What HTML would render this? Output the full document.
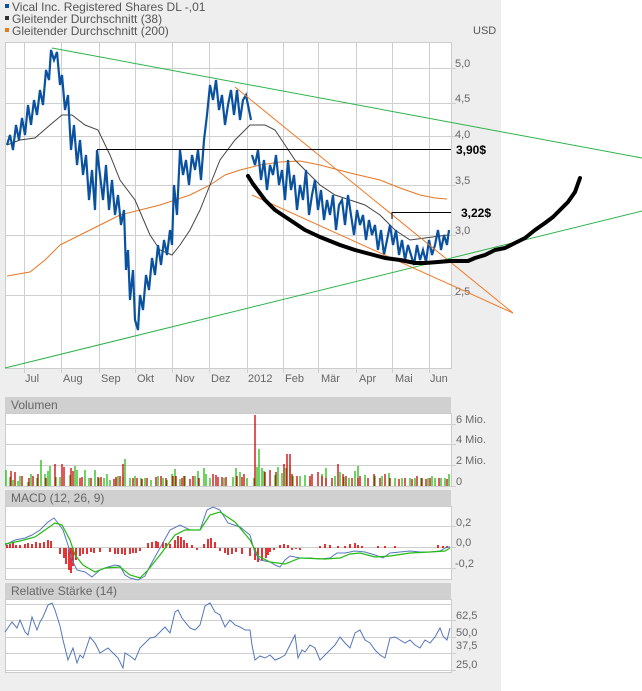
<!DOCTYPE html>
<html><head><meta charset="utf-8"><style>
html,body{margin:0;padding:0;background:#fff;}
svg{display:block;}
text{font-family:"Liberation Sans",sans-serif;}
</style></head><body>
<svg width="642" height="691" viewBox="0 0 642 691" xmlns="http://www.w3.org/2000/svg">
<rect x="0" y="0" width="501" height="691" fill="#eeeeee"/>
<!-- legend -->
<rect x="5" y="4" width="4" height="4" fill="#0a52a0"/>
<rect x="5" y="16" width="4" height="4" fill="#333"/>
<rect x="5" y="28" width="4" height="4" fill="#e87722"/>
<g font-size="12" fill="#555">
<text x="12" y="11">Vical Inc. Registered Shares DL -,01</text>
<text x="12" y="23">Gleitender Durchschnitt (38)</text>
<text x="12" y="35">Gleitender Durchschnitt (200)</text>
<text x="473" y="34" font-size="11">USD</text>
</g>
<!-- price panel -->
<rect x="5.5" y="42.5" width="446" height="326" fill="#fff" stroke="#ccc"/>
<g stroke="#cfcfcf" stroke-width="1">
<path d="M24.5 43V373M61.5 43V373M99.5 43V373M135.5 43V373M172.5 43V373M209.5 43V373M247.5 43V373M283.5 43V373M318.5 43V373M356.5 43V373M392.5 43V373M429.5 43V373"/>
<path d="M6 68.5H456M6 103.5H456M6 136.5H456M6 185.5H456M6 235.5H456M6 295.5H456"/>
</g>
<g font-size="11" fill="#666">
<text x="455" y="67">5,0</text><text x="455" y="102">4,5</text><text x="455" y="138">4,0</text>
<text x="455" y="184">3,5</text><text x="455" y="234">3,0</text><text x="455" y="295">2,5</text>
<text x="25" y="382">Jul</text><text x="63" y="382">Aug</text><text x="101" y="382">Sep</text><text x="137" y="382">Okt</text>
<text x="175" y="382">Nov</text><text x="211" y="382">Dez</text><text x="248" y="382">2012</text><text x="285" y="382">Feb</text>
<text x="321" y="382">Mär</text><text x="359" y="382">Apr</text><text x="395" y="382">Mai</text><text x="430" y="382">Jun</text>
</g>
<!-- MA200 -->
<polyline fill="none" stroke="#e87722" stroke-width="1" points="7,276 30,272 45,260 60,245 80,235 100,225 120,215 140,210 160,205 175,200 190,195 210,185 225,175 240,170 260,165 280,162 300,161 320,165 350,173 380,180 400,188 420,195 435,198 447,199"/>
<!-- MA38 -->
<polyline fill="none" stroke="#444" stroke-width="1" points="7,145 20,140 35,138 50,125 62,115 72,115 85,125 98,130 110,155 120,180 135,200 150,235 160,250 172,255 180,245 190,230 200,210 210,185 220,160 235,140 250,125 265,125 275,130 285,145 295,160 305,170 320,185 335,195 350,200 365,205 380,215 395,230 410,240 425,238 440,236 448,235"/>
<!-- price -->
<polyline fill="none" stroke="#0a52a0" stroke-width="2.2" points="7,145 10,135 13,150 16,125 19,140 22,118 25,135 28,105 31,125 34,100 37,115 40,90 43,105 46,70 49,80 51,50 54,60 57,52 60,85 62,75 65,110 68,95 71,150 74,125 77,165 80,140 83,175 86,155 89,200 92,170 95,210 97,150 100,175 103,200 106,165 109,210 112,180 115,215 118,195 121,225 124,210 126,270 128,250 130,300 133,270 135,320 138,330 140,295 143,310 146,275 149,290 152,258 155,275 158,245 161,265 164,240 167,255 170,230 172,245 174,185 177,215 180,150 183,175 186,160 189,185 192,155 195,170 198,150 201,180 204,140 207,115 210,85 213,100 216,80 219,110 222,95 225,125 228,105 231,90 234,115 237,90 240,120 243,100 246,95 249,110 251,120"/>
<polyline fill="none" stroke="#0a52a0" stroke-width="2.2" points="252,155 255,165 258,150 261,180 264,160 267,190 270,165 273,175 276,155 279,185 282,170 285,200 288,160 291,190 294,175 297,210 300,185 303,200 306,170 309,215 312,195 315,180 318,210 321,190 324,220 327,200 330,215 333,195 336,230 339,205 342,200 345,225 348,195 351,215 354,235 357,210 360,225 363,215 366,240 369,220 372,235 375,225 378,250 381,230 384,255 387,240 390,225 393,245 396,230 399,255 402,240 405,260 408,245 411,255 414,265 417,245 420,260 423,250 426,262 429,240 432,255 435,245 438,230 441,250 444,235 447,245 449,230"/>
<!-- drawn lines -->
<line x1="52" y1="48" x2="642" y2="158" stroke="#2db34a" stroke-width="1"/>
<line x1="5" y1="368" x2="642" y2="211" stroke="#2db34a" stroke-width="1"/>
<line x1="235" y1="87" x2="513" y2="313" stroke="#f07a28" stroke-width="1"/>
<line x1="252" y1="195" x2="513" y2="313" stroke="#f07a28" stroke-width="1"/>
<line x1="97" y1="149.5" x2="451" y2="149.5" stroke="#000" stroke-width="1"/>
<line x1="392" y1="212.5" x2="451" y2="212.5" stroke="#000" stroke-width="1"/>
<path d="M392 212V219" stroke="#000"/>
<g font-size="12" font-weight="bold" fill="#000">
<text x="456" y="154">3,90$</text><text x="461" y="217">3,22$</text>
</g>
<polyline fill="none" stroke="#000" stroke-width="4" stroke-linecap="round" stroke-linejoin="round" points="248,176 253,184 265,200 275,210 290,220 305,230 320,237 340,245 355,250 370,254 385,258 400,260 415,263 425,263 438,262 450,261 460,261 468,261 475,258 485,255 495,250 505,248 515,243 525,238 535,230 545,223 553,217 560,210 568,202 575,192 580,178"/>

<!-- Volume panel -->
<rect x="5" y="397" width="446" height="16" fill="#d0d0d0"/>
<text x="11" y="409" font-size="12" fill="#666">Volumen</text>
<rect x="5.5" y="413.5" width="446" height="73" fill="#fff" stroke="#ccc"/>
<path d="M6 424.5H456M6 444.5H456M6 465.5H456M6 486.5H456" stroke="#cfcfcf"/>
<g font-size="11" fill="#666">
<text x="456" y="423">6 Mio.</text><text x="456" y="443">4 Mio.</text><text x="456" y="464">2 Mio.</text><text x="456" y="485">0</text>
</g>
<path stroke="#22bb11" stroke-width="1.3" d="M6 486v-16M10 486v-9M13 486v-6M18 486v-5M20 486v-10M28 486v-4M31 486v-12M37 486v-8M41 486v-26M45 486v-12M48 486v-15M50 486v-20M56 486v-9M60 486v-9M70 486v-11M75 486v-20M77 486v-16M85 486v-16M89 486v-8M95 486v-16M99 486v-8M104 486v-8M107 486v-12M110 486v-6M116 486v-8M118 486v-10M123 486v-9M125 486v-27M130 486v-8M135 486v-10M141 486v-8M145 486v-8M151 486v-6M158 486v-10M163 486v-8M167 486v-6M172 486v-12M175 486v-17M180 486v-7M185 486v-10M195 486v-10M198 486v-15M204 486v-18M206 486v-12M210 486v-8M224 486v-8M233 486v-9M236 486v-18M240 486v-14M247 486v-8M254 486v-8M257 486v-19M259 486v-37M262 486v-18M264 486v-15M275 486v-11M278 486v-19M282 486v-13M286 486v-18M290 486v-20M293 486v-10M300 486v-10M305 486v-11M310 486v-6M322 486v-12M326 486v-18M335 486v-10M340 486v-14M344 486v-9M349 486v-8M355 486v-15M358 486v-20M365 486v-11M375 486v-10M382 486v-10M389 486v-13M395 486v-8M402 486v-8M410 486v-8M415 486v-8M421 486v-8M428 486v-8M432 486v-10M435 486v-8M441 486v-8M445 486v-8M449 486v-12"/>
<path stroke="#cc0000" stroke-width="1.3" d="M11 486v-15M15 486v-14M22 486v-10M29 486v-8M33 486v-10M38 486v-12M46 486v-8M55 486v-22M62 486v-22M64 486v-19M71 486v-18M73 486v-15M80 486v-8M82 486v-9M91 486v-8M98 486v-9M101 486v-9M114 486v-7M116 486v-9M120 486v-10M123 486v-22M133 486v-8M137 486v-8M142 486v-7M147 486v-8M156 486v-9M161 486v-10M166 486v-8M173 486v-10M176 486v-10M182 486v-8M184 486v-10M190 486v-7M193 486v-10M199 486v-8M213 486v-12M216 486v-11M218 486v-9M222 486v-9M226 486v-9M237 486v-10M242 486v-9M244 486v-12M255 486v-71M265 486v-14M270 486v-16M276 486v-14M284 486v-22M287 486v-32M290 486v-32M292 486v-12M297 486v-10M310 486v-10M312 486v-12M318 486v-14M322 486v-10M326 486v-8M332 486v-8M338 486v-22M343 486v-12M346 486v-10M352 486v-8M358 486v-8M360 486v-10M368 486v-8M374 486v-12M380 486v-8M385 486v-12M390 486v-8M399 486v-7M405 486v-8M412 486v-7M417 486v-10M422 486v-8M426 486v-7M430 486v-8M439 486v-8M447 486v-7"/>

<!-- MACD panel -->
<rect x="5" y="490" width="446" height="16" fill="#d0d0d0"/>
<text x="11" y="502" font-size="12" fill="#666">MACD (12, 26, 9)</text>
<rect x="5.5" y="506.5" width="446" height="73" fill="#fff" stroke="#ccc"/>
<path d="M6 526.5H456M6 547.5H456M6 568.5H456" stroke="#cfcfcf"/>
<g font-size="11" fill="#666">
<text x="456" y="526">0,2</text><text x="456" y="546">0,0</text><text x="455" y="567">-0,2</text>
</g>
<path stroke="#e00000" stroke-width="1.6" d="M7 548v-3M10 548v-4M13 548v-5M16 548v-3M20 548v-3M25 548v-4M28 548v-5M32 548v-4M36 548v-6M40 548v-5M44 548v-6M48 548v-8M51 548v-7M60 548v6M64 548v10M66 548v16M69 548v22M71 548v25M73 548v18M76 548v12M80 548v8M83 548v6M87 548v6M91 548v4M94 548v5M100 548v4M110 548v4M115 548v6M118 548v6M122 548v6M125 548v7M130 548v6M133 548v5M136 548v5M140 548v3M148 548v-5M152 548v-6M156 548v-7M158 548v-6M163 548v-6M166 548v-5M170 548v-4M175 548v-8M178 548v-12M181 548v-11M184 548v-8M187 548v-5M192 548v-3M197 548v2M204 548v-4M208 548v-9M211 548v-10M215 548v-6M220 548v3M225 548v5M228 548v7M232 548v6M236 548v4M242 548v6M250 548v8M255 548v12M258 548v14M262 548v12M266 548v10M268 548v7M270 548v4M274 548v2M280 548v-3M284 548v-4M288 548v-3M292 548v2M296 548v1M300 548v2M320 548v-2M325 548v-4M330 548v-3M338 548v-2M345 548v-2M350 548v-4M355 548v-5M358 548v-3M362 548v-2M378 548v-2M385 548v-2M395 548v-2M438 548v-3M443 548v-2M447 548v-2"/>
<polyline fill="none" stroke="#5577bb" stroke-width="1" points="5,545 15,540 25,538 32,535 40,530 48,522 54,518 58,523 63,530 68,545 72,560 77,570 85,572 92,577 100,570 108,567 115,565 120,566 125,575 130,578 138,580 145,576 150,566 160,548 170,530 180,525 190,530 200,530 207,510 213,507 220,510 228,523 240,527 250,535 255,553 260,560 270,562 275,565 280,567 285,560 290,556 300,558 310,558 320,559 330,558 337,553 345,553 355,551 365,552 375,555 383,558 390,553 400,552 410,551 420,552 430,552 440,551 447,547 450,547"/>
<polyline fill="none" stroke="#22bb11" stroke-width="1.2" points="5,544 20,541 35,537 45,530 55,523 62,525 70,540 75,555 83,565 95,572 105,568 120,567 130,575 140,578 148,570 160,555 175,535 185,530 200,530 210,515 220,512 235,522 250,540 258,556 270,562 285,564 300,558 325,559 340,558 350,554 360,553 375,557 390,556 410,553 430,552 445,551 450,548"/>

<!-- RSI panel -->
<rect x="5" y="583" width="446" height="16" fill="#d0d0d0"/>
<text x="11" y="595" font-size="12" fill="#666">Relative Stärke (14)</text>
<rect x="5.5" y="599.5" width="446" height="73" fill="#fff" stroke="#ccc"/>
<path d="M6 604.5H451M6 620.5H456M6 637.5H456M6 653.5H456M6 670.5H456" stroke="#cfcfcf"/>
<g font-size="11" fill="#666">
<text x="456" y="619">62,5</text><text x="456" y="636">50,0</text><text x="456" y="649">37,5</text><text x="456" y="668">25,0</text>
</g>
<polyline fill="none" stroke="#5577bb" stroke-width="1" points="5,632 12,622 17,628 20,620 25,632 28,635 32,617 37,630 40,622 43,617 48,605 52,603 55,610 60,626 63,640 68,660 70,655 73,648 77,663 80,655 83,658 90,637 95,643 100,653 108,648 115,655 118,658 123,668 125,653 130,656 135,660 140,648 145,643 150,638 155,637 160,632 165,627 170,633 175,612 178,610 182,618 185,622 190,628 195,630 200,625 205,606 210,603 215,612 220,615 225,627 230,620 235,625 240,627 245,630 250,630 252,645 255,660 260,656 265,658 270,655 275,660 280,658 285,655 290,645 295,635 298,658 302,650 305,652 310,645 315,648 320,660 325,655 330,650 335,645 340,637 345,643 350,648 355,633 360,630 365,640 370,643 375,650 380,655 385,658 390,638 395,637 400,640 405,643 410,640 415,645 420,648 425,640 430,643 435,637 440,628 443,636 447,640 450,628"/>
</svg>
</body></html>
